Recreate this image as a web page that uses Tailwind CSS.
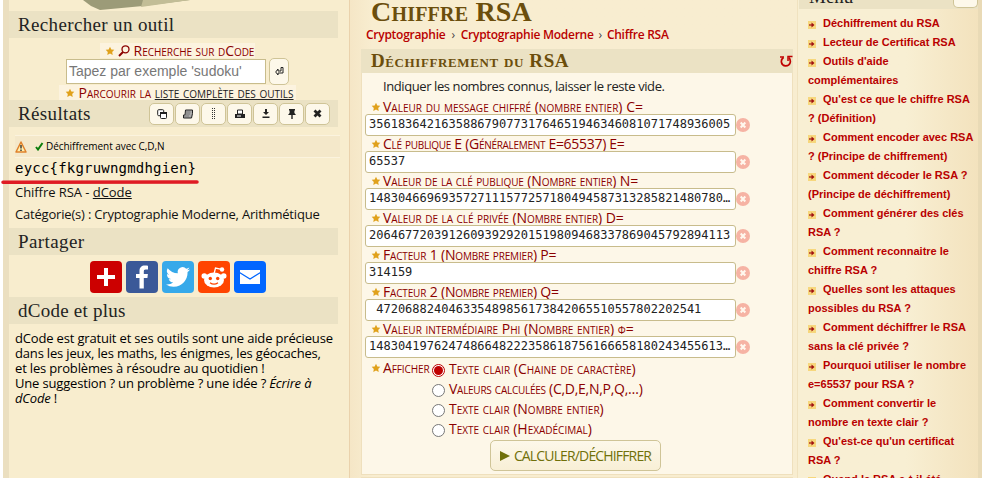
<!DOCTYPE html>
<html lang="fr">
<head>
  <meta charset="UTF-8">
  <meta name="viewport" content="width=device-width, initial-scale=1.0">
  <title>Chiffre RSA - dCode</title>
  <script src="https://cdn.jsdelivr.net/npm/@tailwindcss/browser@4"></script>
</head>
<body class="h-[478px] overflow-hidden bg-white font-['Open_Sans',sans-serif] text-[13px] text-[#222]">
  <!-- Icons -->
  <svg class="hidden">
    <symbol id="star" viewBox="0 0 10 10"><path fill="#e0a11b" d="M5 .8l1.3 2.6 3 .4-2.1 2.1.5 3L5 7.5 2.3 8.9l.5-3L.7 3.8l3-.4z"/></symbol>
    <symbol id="clear" viewBox="0 0 14 14"><circle cx="7" cy="7" r="7" fill="#f6b3a4"/><path d="M4.7 4.5l4.6 5M9.3 4.5l-4.6 5" stroke="#fff8ee" stroke-width="2"/></symbol>
    <symbol id="bullet" viewBox="0 0 8 8"><path fill="#f7d77c" d="M0 0h8v8H0z"/><path d="M1 4h4" stroke="#a01010" stroke-width="1.2"/><path d="M3.500 1.500L6.500 4l-3 2.500z" fill="#a01010"/></symbol>
  </svg>

  <div class="flex h-[478px] pl-[3px]">
    <!-- Left column -->
    <aside class="h-full w-[347px] shrink-0 border-r border-[#ead2ac] bg-[#f8edce]">
      <div class="h-full border-l-[6px] border-[#ebdfc0] pr-[11px]">
        <div class="h-[11px] pl-[74px]">
          <svg class="h-[11px] w-[120px]" viewBox="0 0 120 11"><path fill="#9c9b78" d="M0 0h107L60 6 17 10 8 6z"/><path fill="#c2bd96" d="M60 0h47L58 7z"/></svg>
        </div>
        <h2 class="h-[27px] bg-[#ebe2c4] pl-[9px] font-['Liberation_Serif',serif] text-[19px] leading-[27px] tracking-[0.35px]">Rechercher un outil</h2>
        <div class="flex h-[62px] flex-col items-center pt-[5px] pl-[8px]">
          <div class="flex h-[15px] items-center bg-[#fcf3df] px-[1px] pl-[5px] text-[#8b0000]">
            <svg class="h-[10px] w-[10px]"><use href="#star"/></svg>
            <svg class="ml-[3px] h-3 w-3" viewBox="0 0 12 12" fill="none" stroke="#8b0000"><circle cx="7.5" cy="4.3" r="3.5" stroke-width="1.3"/><path d="M5 7L1 11" stroke-width="2"/></svg>
            <span class="ml-[4px] text-[14px] leading-[15px] tracking-[-0.05px] [font-variant:small-caps]">Recherche sur dCode</span>
          </div>
          <div class="flex h-[27px] items-center gap-[3px]">
            <div class="h-[25px] w-[200px] border border-[#c8bc8c] bg-white pl-[2px] font-['Liberation_Sans',sans-serif] text-[14px] leading-[23px] text-[#777]">Tapez par exemple 'sudoku'</div>
            <div class="flex h-[27px] w-[20px] items-center justify-center rounded-[5px] border border-[#cfc497] bg-[#fdf8ea]">
              <svg class="h-[9px] w-[9px]" viewBox="0 0 9 9" fill="none" stroke="#222"><path d="M6 .5h2v5.5H3"/><path d="M6 .5V4H3V2L.7 5 3 8V6"/></svg>
            </div>
          </div>
          <div class="flex h-[15px] items-center bg-[#fcf3df] px-[2px] pl-[6px] text-[#8b0000]">
            <svg class="h-[10px] w-[10px]"><use href="#star"/></svg>
            <span class="ml-[3px] text-[14px] leading-[15px] tracking-[0px] whitespace-nowrap [font-variant:small-caps]">Parcourir la <span class="text-[#222] underline">liste complète des outils</span></span>
          </div>
        </div>
        <div class="flex h-[27px] items-center justify-between bg-[#ebe2c4] pr-2 pl-[9px]">
          <h2 class="font-['Liberation_Serif',serif] text-[19px] leading-[27px] tracking-[0.35px]">Résultats</h2>
          <div class="flex gap-[1px]">
            <div class="flex h-[22px] w-[25px] items-center justify-center rounded-[5px] border border-[#cfc497] bg-[#fdf8ea]"><svg class="size-[10px]" viewBox="0 0 10 10"><rect x=".7" y=".7" width="6" height="6" rx="1" fill="#fff" stroke="#222"/><rect x="3.5" y="3.5" width="6" height="6" rx="1" fill="#fff" stroke="#222"/><path d="M3 4h7" stroke="#222" stroke-width="2"/></svg></div>
            <div class="flex h-[22px] w-[25px] items-center justify-center rounded-[5px] border border-[#cfc497] bg-[#fdf8ea]"><svg class="size-[10px]" viewBox="0 0 10 10"><path d="M2.500 1h7v3.500L8.500 9h-8V6h1.500z" fill="#aaa" stroke="#222"/><path d="M3 3h4.500M3 5h4M1 7h5" stroke="#777"/></svg></div>
            <div class="flex h-[22px] w-[25px] items-center justify-center rounded-[5px] border border-[#cfc497] bg-[#fdf8ea]"><svg class="h-[11px] w-[5px]" viewBox="0 0 5 11"><path d="M1.5 0v11M3.500 0v11" stroke="#333" stroke-dasharray="1 1"/></svg></div>
            <div class="flex h-[22px] w-[25px] items-center justify-center rounded-[5px] border border-[#cfc497] bg-[#fdf8ea]"><svg class="size-[10px]" viewBox="0 0 10 10"><path d="M2.5 1h5v4h-5z" fill="#fff" stroke="#222"/><path d="M0 5h10v4H0z" fill="#222"/><path d="M2 7h4" stroke="#fff"/></svg></div>
            <div class="flex h-[22px] w-[25px] items-center justify-center rounded-[5px] border border-[#cfc497] bg-[#fdf8ea]"><svg class="size-[10px]" viewBox="0 0 10 10" fill="#222"><path d="M4 0h2v3h2L5 6 2 3h2zM1.500 7.500h7V9h-7z"/></svg></div>
            <div class="flex h-[22px] w-[25px] items-center justify-center rounded-[5px] border border-[#cfc497] bg-[#fdf8ea]"><svg class="size-[10px]" viewBox="0 0 10 10" fill="#222"><path d="M2 0h6v1.5H7.4V4L9 6H5.7v4H4.3V6H1l1.600-2V1.500H2z"/></svg></div>
            <div class="flex h-[22px] w-[25px] items-center justify-center rounded-[5px] border border-[#cfc497] bg-[#fdf8ea]"><svg class="size-[9px]" viewBox="0 0 9 9"><path d="M1.500 1.500l6 6M7.500 1.500l-6 6" stroke="#222" stroke-width="2.800"/></svg></div>
          </div>
        </div>
        <div class="flex h-[101px] flex-col pt-[8px] pl-[6px]">
          <div class="-mr-[2px] flex h-[23px] shrink-0 items-center border-y border-[#fbf3de] bg-[#f4e8ca]">
            <svg class="h-3 w-3" viewBox="0 0 12 12"><path d="M6 1l5 10H1z" fill="#fff0b0" stroke="#e0822c" stroke-width="1.500" stroke-linejoin="round"/><path d="M6 4v3.500M6 8.500V10" stroke="#222" stroke-width="1.300"/></svg>
            <svg class="ml-[8px] h-[9px] w-[9px]" viewBox="0 0 9 9"><path d="M1 5l2 2.500L7.500 1" fill="none" stroke="#0b7d0b" stroke-width="2"/></svg>
            <span class="ml-[2px] text-[10px] tracking-[-0.05px] text-black">Déchiffrement avec C,D,N</span>
          </div>
          <div class="relative h-[22px] font-['DejaVu_Sans_Mono',monospace] text-[14px] leading-[20px] tracking-[0.2px] text-black">eycc{fkgruwngmdhgien}
            <svg class="absolute top-[21px] -left-[14px] h-[6px] w-[200px]" viewBox="0 0 200 6"><path d="M2 3.200L196 3" stroke="#df1b24" stroke-width="3.500" stroke-linecap="round"/></svg>
          </div>
          <p class="h-[23px] text-[13px] leading-[25px] tracking-[-0.050px] text-[#111]">Chiffre RSA - <span class="underline">dCode</span></p>
          <p class="text-[13px] leading-[23px] tracking-[-0.190px] whitespace-nowrap text-[#111]">Catégorie(s) : Cryptographie Moderne, Arithmétique</p>
        </div>
        <h2 class="h-[27px] bg-[#ebe2c4] pl-[9px] font-['Liberation_Serif',serif] text-[19px] leading-[27px] tracking-[0.4px]">Partager</h2>
        <div class="flex h-[42px] gap-1 pt-[6px] pl-[81px]">
          <svg class="size-8 shrink-0 rounded bg-[#cc0000]" viewBox="0 0 32 32"><path d="M7 16h18M16 7v18" stroke="#fff" stroke-width="4"/></svg>
          <svg class="size-8 shrink-0 rounded bg-[#3b5998]" viewBox="0 0 32 32"><path fill="#fff" d="M17.800 27.500V17h3.600l.500-4h-4.100v-2.500c0-1.200.300-2 2-2h2.200V4.700c-.400 0-1.700-.200-3.200-.200-3.200 0-5.300 1.900-5.300 5.500v3H10v4h3.500v10.500z"/></svg>
          <svg class="size-8 shrink-0 rounded bg-[#36a9ea]" viewBox="0 0 32 32"><path fill="#fff" d="M28 8.560a9.900 9.900 0 01-2.830.770 4.930 4.930 0 002.170-2.720 9.900 9.900 0 01-3.130 1.190 4.920 4.920 0 00-8.390 4.490A13.980 13.980 0 015.670 7.150a4.930 4.930 0 001.520 6.570 4.900 4.900 0 01-2.230-.610v.060a4.930 4.930 0 003.950 4.830 4.900 4.900 0 01-2.220.080 4.930 4.930 0 004.600 3.420A9.880 9.880 0 014 23.540a13.940 13.940 0 007.550 2.210c9.060 0 14.010-7.500 14.010-14.010l-.020-.640A10 10 0 0028 8.560z"/></svg>
          <svg class="size-8 shrink-0 rounded bg-[#ff4500]" viewBox="0 0 32 32"><path d="M16 13l1.500-6 5 1.200" fill="none" stroke="#fff" stroke-width="1.300"/><g fill="#fff"><circle cx="24" cy="8.500" r="2.200"/><circle cx="6.300" cy="15" r="2.800"/><circle cx="25.700" cy="15" r="2.800"/><ellipse cx="16" cy="19" rx="10" ry="7.500"/></g><circle cx="12.300" cy="17.500" r="1.700" fill="#ff4500"/><circle cx="19.700" cy="17.500" r="1.700" fill="#ff4500"/><path d="M12 21.800q4 2.800 8 0" fill="none" stroke="#ff4500" stroke-width="1.300"/></svg>
          <svg class="size-8 shrink-0 rounded bg-[#0166ff]" viewBox="0 0 32 32"><path d="M6 9h20v14H6z" fill="#fff"/><path d="M5.500 11.500L16 18l10.500-6.500" fill="none" stroke="#0166ff" stroke-width="1.200"/></svg>
        </div>
        <h2 class="h-[27px] bg-[#ebe2c4] pl-[9px] font-['Liberation_Serif',serif] text-[19px] leading-[27px] tracking-[0.25px]">dCode et plus</h2>
        <p class="pt-[7px] pl-[6px] text-[13px] leading-[15px] tracking-[-0.170px] whitespace-nowrap text-black">dCode est gratuit et ses outils sont une aide précieuse<br>dans les jeux, les maths, les énigmes, les géocaches,<br>et les problèmes à résoudre au quotidien !<br>Une suggestion ? un problème ? une idée ? <i>Écrire à<br>dCode</i> !</p>
      </div>
    </aside>

    <!-- Tool form -->
    <main class="flex h-full w-[447px] shrink-0 flex-col overflow-hidden bg-[#f8edd0] bg-linear-to-r from-[#f5e6c6] via-[#f8edd0] via-5% to-[#f8edd0] pl-[11px]">
      <h1 class="h-[27px] shrink-0 pl-[10px] font-['Liberation_Serif',serif] text-[28px] leading-[24px] font-bold tracking-[0.200px] text-[#6b4e0c] [font-variant:small-caps]">Chiffre RSA</h1>
      <p class="flex h-[22px] shrink-0 pl-[5px] text-[12px] leading-[16px] font-semibold tracking-[-0.270px] text-[#b90000]">Cryptographie <span class="mx-[6px] font-normal text-[#444]">›</span> Cryptographie Moderne <span class="mx-[5px] font-normal text-[#444]">›</span> Chiffre RSA</p>
      <div class="flex h-[24px] w-[432px] shrink-0 items-center justify-between bg-[#ebe2c4] pl-[10px]">
        <h2 class="font-['Liberation_Serif',serif] text-[19px] leading-[24px] font-bold tracking-[0.600px] text-[#6b4e0c] [font-variant:small-caps]">Déchiffrement du RSA</h2>
        <svg class="h-3 w-[13px]" viewBox="0 0 13 12" fill="none" stroke="#c00000"><path d="M3.500 2.500C0 5 1 10.500 5.500 10.800C10.500 11 11.500 6 9 2.500" stroke-width="1.700"/><path d="M8 6V1.500H12.500M0 2h4" stroke-width="1.500"/></svg>
      </div>
      <div class="h-[402px] w-[432px] shrink-0 border border-t-0 border-[#efe0bd] bg-[#fdf7e8] pl-[3px] text-[#8b0000]">
        <p class="h-[26px] pl-[18px] text-[13px] leading-[27px] tracking-[-0.410px] text-[#222]">Indiquer les nombres connus, laisser le reste vide.</p>

        <div class="flex h-[15px] items-center gap-[2px] pl-[6px] text-[14px] leading-[15px] tracking-[0.020px] whitespace-nowrap [font-variant:small-caps]"><svg class="size-[10px]"><use href="#star"/></svg><span>Valeur du message chiffré (nombre entier) C=</span></div>
        <div class="flex h-[22px] items-center"><div class="h-[22px] w-[371px] overflow-hidden rounded-[3px] border border-[#c8bc8c] bg-white pl-[3px] font-['DejaVu_Sans_Mono',monospace] text-[12px] leading-[19px] whitespace-pre text-[#222]">35618364216358867907731764651946346081071748936005</div><svg class="size-[14px]"><use href="#clear"/></svg></div>

        <div class="flex h-[15px] items-center gap-[2px] pl-[6px] text-[14px] leading-[15px] tracking-[-0.300px] whitespace-nowrap [font-variant:small-caps]"><svg class="size-[10px]"><use href="#star"/></svg><span>Clé publique E (Généralement E=65537) E=</span></div>
        <div class="flex h-[22px] items-center"><div class="h-[22px] w-[371px] overflow-hidden rounded-[3px] border border-[#c8bc8c] bg-white pl-[3px] font-['DejaVu_Sans_Mono',monospace] text-[12px] leading-[19px] whitespace-pre text-[#222]">65537</div><svg class="size-[14px]"><use href="#clear"/></svg></div>

        <div class="flex h-[15px] items-center gap-[2px] pl-[6px] text-[14px] leading-[15px] tracking-[-0.100px] whitespace-nowrap [font-variant:small-caps]"><svg class="size-[10px]"><use href="#star"/></svg><span>Valeur de la clé publique (Nombre entier) N=</span></div>
        <div class="flex h-[22px] items-center"><div class="h-[22px] w-[371px] overflow-hidden rounded-[3px] border border-[#c8bc8c] bg-white pl-[3px] font-['DejaVu_Sans_Mono',monospace] text-[12px] leading-[19px] whitespace-pre text-[#222]">1483046696935727111577257180494587313285821480780…</div><svg class="size-[14px]"><use href="#clear"/></svg></div>

        <div class="flex h-[15px] items-center gap-[2px] pl-[6px] text-[14px] leading-[15px] tracking-[-0.050px] whitespace-nowrap [font-variant:small-caps]"><svg class="size-[10px]"><use href="#star"/></svg><span>Valeur de la clé privée (Nombre entier) D=</span></div>
        <div class="flex h-[22px] items-center"><div class="h-[22px] w-[371px] overflow-hidden rounded-[3px] border border-[#c8bc8c] bg-white pl-[3px] font-['DejaVu_Sans_Mono',monospace] text-[12px] leading-[19px] whitespace-pre text-[#222]">20646772039126093929201519809468337869045792894113</div><svg class="size-[14px]"><use href="#clear"/></svg></div>

        <div class="flex h-[15px] items-center gap-[2px] pl-[6px] text-[14px] leading-[15px] tracking-[-0.170px] whitespace-nowrap [font-variant:small-caps]"><svg class="size-[10px]"><use href="#star"/></svg><span>Facteur 1 (Nombre premier) P=</span></div>
        <div class="flex h-[22px] items-center"><div class="h-[22px] w-[371px] overflow-hidden rounded-[3px] border border-[#c8bc8c] bg-white pl-[3px] font-['DejaVu_Sans_Mono',monospace] text-[12px] leading-[19px] whitespace-pre text-[#222]">314159</div><svg class="size-[14px]"><use href="#clear"/></svg></div>

        <div class="flex h-[15px] items-center gap-[2px] pl-[6px] text-[14px] leading-[15px] tracking-[-0.170px] whitespace-nowrap [font-variant:small-caps]"><svg class="size-[10px]"><use href="#star"/></svg><span>Facteur 2 (Nombre premier) Q=</span></div>
        <div class="flex h-[22px] items-center"><div class="h-[22px] w-[371px] overflow-hidden rounded-[3px] border border-[#c8bc8c] bg-white pl-[3px] font-['DejaVu_Sans_Mono',monospace] text-[12px] leading-[19px] whitespace-pre text-[#222]"> 472068824046335489856173842065510557802202541</div><svg class="size-[14px]"><use href="#clear"/></svg></div>

        <div class="flex h-[15px] items-center gap-[2px] pl-[6px] text-[14px] leading-[15px] tracking-[-0.020px] whitespace-nowrap [font-variant:small-caps]"><svg class="size-[10px]"><use href="#star"/></svg><span>Valeur intermédiaire Phi (Nombre entier) φ=</span></div>
        <div class="flex h-[22px] items-center"><div class="h-[22px] w-[371px] overflow-hidden rounded-[3px] border border-[#c8bc8c] bg-white pl-[3px] font-['DejaVu_Sans_Mono',monospace] text-[12px] leading-[19px] whitespace-pre text-[#222]">1483041976247486648222358618756166658180243455613…</div><svg class="size-[14px]"><use href="#clear"/></svg></div>

        <div class="flex pt-[2px] pl-[6px] text-[14px] leading-[20px] tracking-[0.050px] whitespace-nowrap [font-variant:small-caps]">
          <div class="flex h-[16px] w-[61px] items-center gap-[2px] tracking-[-0.100px]"><svg class="size-[10px] shrink-0"><use href="#star"/></svg><span>Afficher</span></div>
          <div class="-mt-px">
            <div class="flex h-[20px] items-center gap-1"><span class="mt-[2px] flex size-[13px] items-center justify-center rounded-full border border-[#b90000] bg-white"><span class="size-[9px] rounded-full bg-[#c00000]"></span></span>Texte clair (Chaine de caractère)</div>
            <div class="flex h-[20px] items-center gap-1 tracking-[-0.270px]"><span class="mt-[2px] size-[13px] rounded-full border border-[#777] bg-white"></span>Valeurs calculées (C,D,E,N,P,Q,…)</div>
            <div class="flex h-[20px] items-center gap-1 tracking-[0px]"><span class="mt-[2px] size-[13px] rounded-full border border-[#777] bg-white"></span>Texte clair (Nombre entier)</div>
            <div class="flex h-[20px] items-center gap-1 tracking-[0px]"><span class="mt-[2px] size-[13px] rounded-full border border-[#777] bg-white"></span>Texte clair (Hexadécimal)</div>
          </div>
        </div>
        <div class="mt-[1px] ml-[125px] flex h-[31px] w-[171px] items-center justify-center gap-[4px] rounded-[5px] border border-[#cfc497] bg-linear-to-b from-[#fdf8ea] to-[#f8efd6] text-[14px] tracking-[-0.850px] text-[#70700a]">
          <svg class="h-[10px] w-[10px]" viewBox="0 0 10 10"><path d="M0 0l10 5-10 5z" fill="#70700a"/></svg>CALCULER/DÉCHIFFRER
        </div>
      </div>
      <div class="mt-[2px] h-3 w-[432px] shrink-0 border border-[#efe0bd] bg-[#fdf7e8]"></div>
    </main>

    <!-- Menu -->
    <aside class="h-full w-[181px] shrink-0 border-l border-[#f0e2bf] bg-linear-to-r from-[#f8efd3] from-60% to-[#f3e2bd] font-['Liberation_Sans',sans-serif]">
      <div class="ml-[1px] flex h-[9px] justify-between overflow-hidden bg-[#ebe2c4] pl-[10px]">
        <h2 class="-mt-[17px] font-['Liberation_Serif',serif] text-[19px] leading-[27px]">Menu</h2>
        <div class="h-[8px] w-[25px] rounded-b-[5px] border border-t-0 border-[#cfc497] bg-[#fdf8ea]"></div>
      </div>
      <ul class="pt-[5px] pl-[10px] text-[11px] leading-[19px] font-bold whitespace-nowrap text-[#b90000] [&_svg]:mr-[7px] [&_svg]:inline-block [&_svg]:size-2 [&_svg]:align-[-2px]">
        <li><svg><use href="#bullet"/></svg>Déchiffrement du RSA</li>
        <li><svg><use href="#bullet"/></svg>Lecteur de Certificat RSA</li>
        <li><svg><use href="#bullet"/></svg>Outils d'aide<br>complémentaires</li>
        <li><svg><use href="#bullet"/></svg>Qu'est ce que le chiffre RSA<br>? (Définition)</li>
        <li><svg><use href="#bullet"/></svg>Comment encoder avec RSA<br>? (Principe de chiffrement)</li>
        <li><svg><use href="#bullet"/></svg>Comment décoder le RSA ?<br>(Principe de déchiffrement)</li>
        <li><svg><use href="#bullet"/></svg>Comment générer des clés<br>RSA ?</li>
        <li><svg><use href="#bullet"/></svg>Comment reconnaitre le<br>chiffre RSA ?</li>
        <li><svg><use href="#bullet"/></svg>Quelles sont les attaques<br>possibles du RSA ?</li>
        <li><svg><use href="#bullet"/></svg>Comment déchiffrer le RSA<br>sans la clé privée ?</li>
        <li><svg><use href="#bullet"/></svg>Pourquoi utiliser le nombre<br>e=65537 pour RSA ?</li>
        <li><svg><use href="#bullet"/></svg>Comment convertir le<br>nombre en texte clair ?</li>
        <li><svg><use href="#bullet"/></svg>Qu'est-ce qu'un certificat<br>RSA ?</li>
        <li><svg><use href="#bullet"/></svg>Quand le RSA a-t-il été</li>
      </ul>
    </aside>
    <div class="h-full grow bg-[#e9dab6]"></div>
  </div>
</body>
</html>
